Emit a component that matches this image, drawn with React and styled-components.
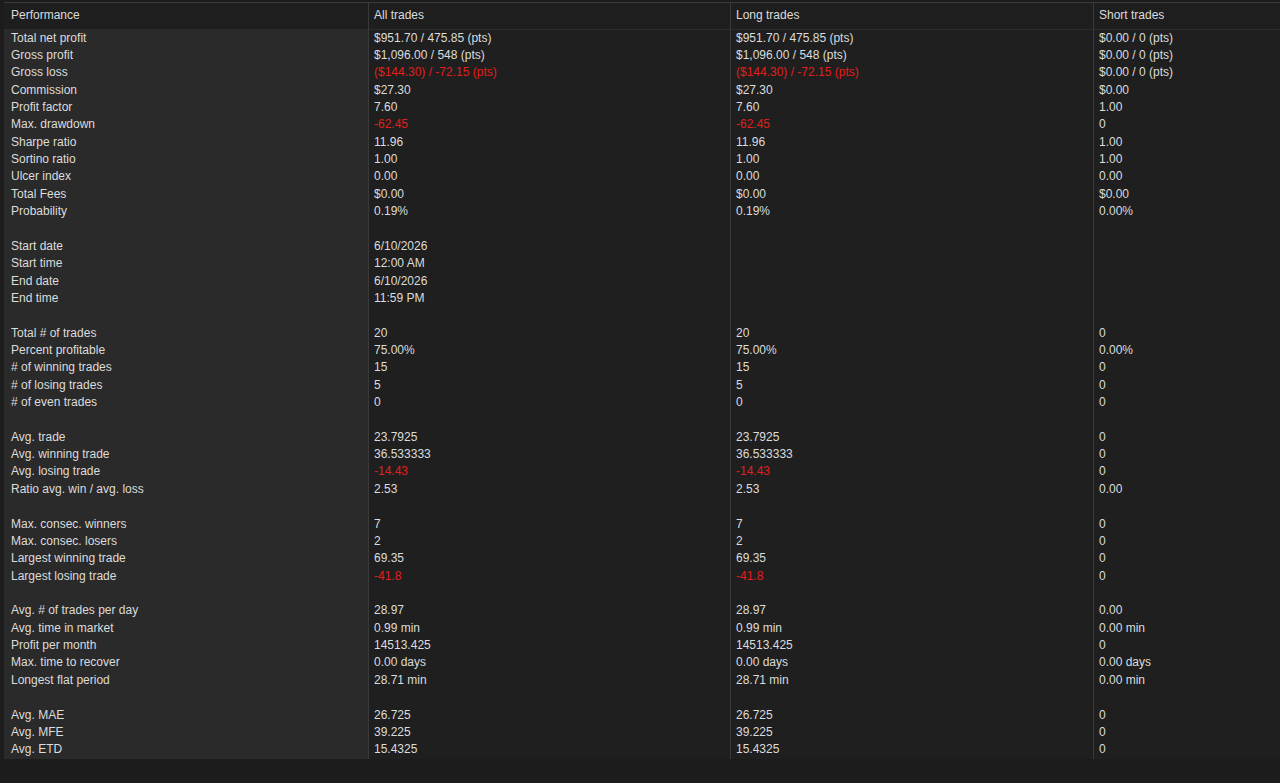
import React from "react";
import styled, { createGlobalStyle } from "styled-components";

const G = createGlobalStyle`
  body{margin:0;background:#1c1c1c;font-family:"Liberation Sans",Arial,sans-serif;}
`;
const Page = styled.div`width:1280px;height:783px;background:#1c1c1c;padding-top:2px;box-sizing:border-box;overflow:hidden;`;
const Table = styled.div`
  margin-left:4px;border-top:1px solid #3a3a3a;
  display:grid;grid-template-columns:364px 362px 363px 187px;
`;
const Cell = styled.div`
  height:${p=>p.h||17.37}px;line-height:${p=>p.h||17.37}px;font-size:12px;
  padding-left:${p=>p.first?7:5}px;white-space:nowrap;
  color:${p=>p.neg?"#e0201c":"#dcdcdc"};
  background:${p=>p.head?"#1e1e1e":p.first?"#2a2a2a":"#1f1f1f"};
  border-left:${p=>p.first?"none":"1px solid #3a3a3a"};
  ${p=>p.head?"border-bottom:1px solid #2c2c2c;":""}
`;

const r=(l,a,b,c)=>[l,a,b,c];
const rows=[
r("Total net profit","$951.70 / 475.85 (pts)","$951.70 / 475.85 (pts)","$0.00 / 0 (pts)"),
r("Gross profit","$1,096.00 / 548 (pts)","$1,096.00 / 548 (pts)","$0.00 / 0 (pts)"),
r("Gross loss","-($144.30) / -72.15 (pts)","-($144.30) / -72.15 (pts)","$0.00 / 0 (pts)"),
r("Commission","$27.30","$27.30","$0.00"),
r("Profit factor","7.60","7.60","1.00"),
r("Max. drawdown","--62.45","--62.45","0"),
r("Sharpe ratio","11.96","11.96","1.00"),
r("Sortino ratio","1.00","1.00","1.00"),
r("Ulcer index","0.00","0.00","0.00"),
r("Total Fees","$0.00","$0.00","$0.00"),
r("Probability","0.19%","0.19%","0.00%"),
null,
r("Start date","6/10/2026","",""),
r("Start time","12:00 AM","",""),
r("End date","6/10/2026","",""),
r("End time","11:59 PM","",""),
null,
r("Total # of trades","20","20","0"),
r("Percent profitable","75.00%","75.00%","0.00%"),
r("# of winning trades","15","15","0"),
r("# of losing trades","5","5","0"),
r("# of even trades","0","0","0"),
null,
r("Avg. trade","23.7925","23.7925","0"),
r("Avg. winning trade","36.533333","36.533333","0"),
r("Avg. losing trade","--14.43","--14.43","0"),
r("Ratio avg. win / avg. loss","2.53","2.53","0.00"),
null,
r("Max. consec. winners","7","7","0"),
r("Max. consec. losers","2","2","0"),
r("Largest winning trade","69.35","69.35","0"),
r("Largest losing trade","--41.8","--41.8","0"),
null,
r("Avg. # of trades per day","28.97","28.97","0.00"),
r("Avg. time in market","0.99 min","0.99 min","0.00 min"),
r("Profit per month","14513.425","14513.425","0"),
r("Max. time to recover","0.00 days","0.00 days","0.00 days"),
r("Longest flat period","28.71 min","28.71 min","0.00 min"),
null,
r("Avg. MAE","26.725","26.725","0"),
r("Avg. MFE","39.225","39.225","0"),
r("Avg. ETD","15.4325","15.4325","0"),
];

export default function App(){
  return <Page><G/><Table>
    {["Performance","All trades","Long trades","Short trades"].map((h,i)=><Cell key={h} head first={i===0} h={25.5}>{h}</Cell>)}
    {rows.flatMap((row,ri)=>(row||["","","",""]).map((v,ci)=>{
      const neg=v.startsWith("-");
      return <Cell key={ri+"-"+ci} first={ci===0} neg={neg}>{neg?v.slice(1):v}</Cell>;
    }))}
  </Table></Page>;
}
